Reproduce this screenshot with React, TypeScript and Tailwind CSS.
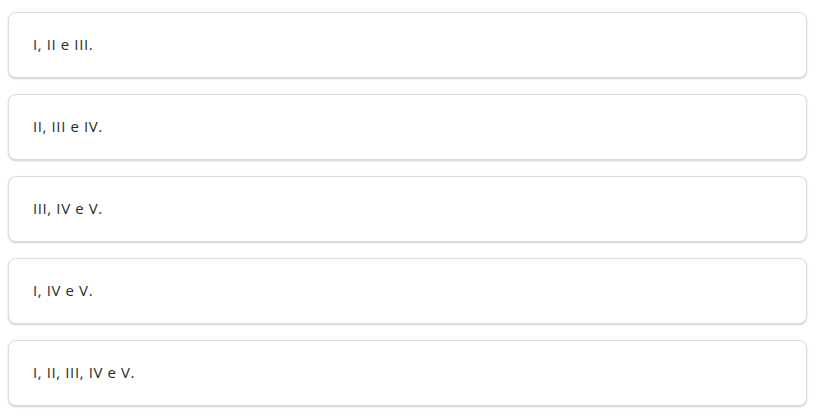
const options = ["I, II e III.", "II, III e IV.", "III, IV e V.", "I, IV e V.", "I, II, III, IV e V."];

export default function App() {
  return (
    <div className="min-h-screen bg-white pl-2 pt-3" style={{ fontFamily: "'Open Sans', sans-serif" }}>
      <div className="flex w-[799px] flex-col gap-4">
        {options.map((text) => (
          <div
            key={text}
            className="flex h-[66px] items-center rounded-lg border border-[#dcdcdc] bg-white px-6 pb-0.5 shadow-[0_1px_2px_rgba(0,0,0,0.2)]"
          >
            <span className="text-[15px] tracking-[0.6px] text-[#2b2b2b]">{text}</span>
          </div>
        ))}
      </div>
    </div>
  );
}
